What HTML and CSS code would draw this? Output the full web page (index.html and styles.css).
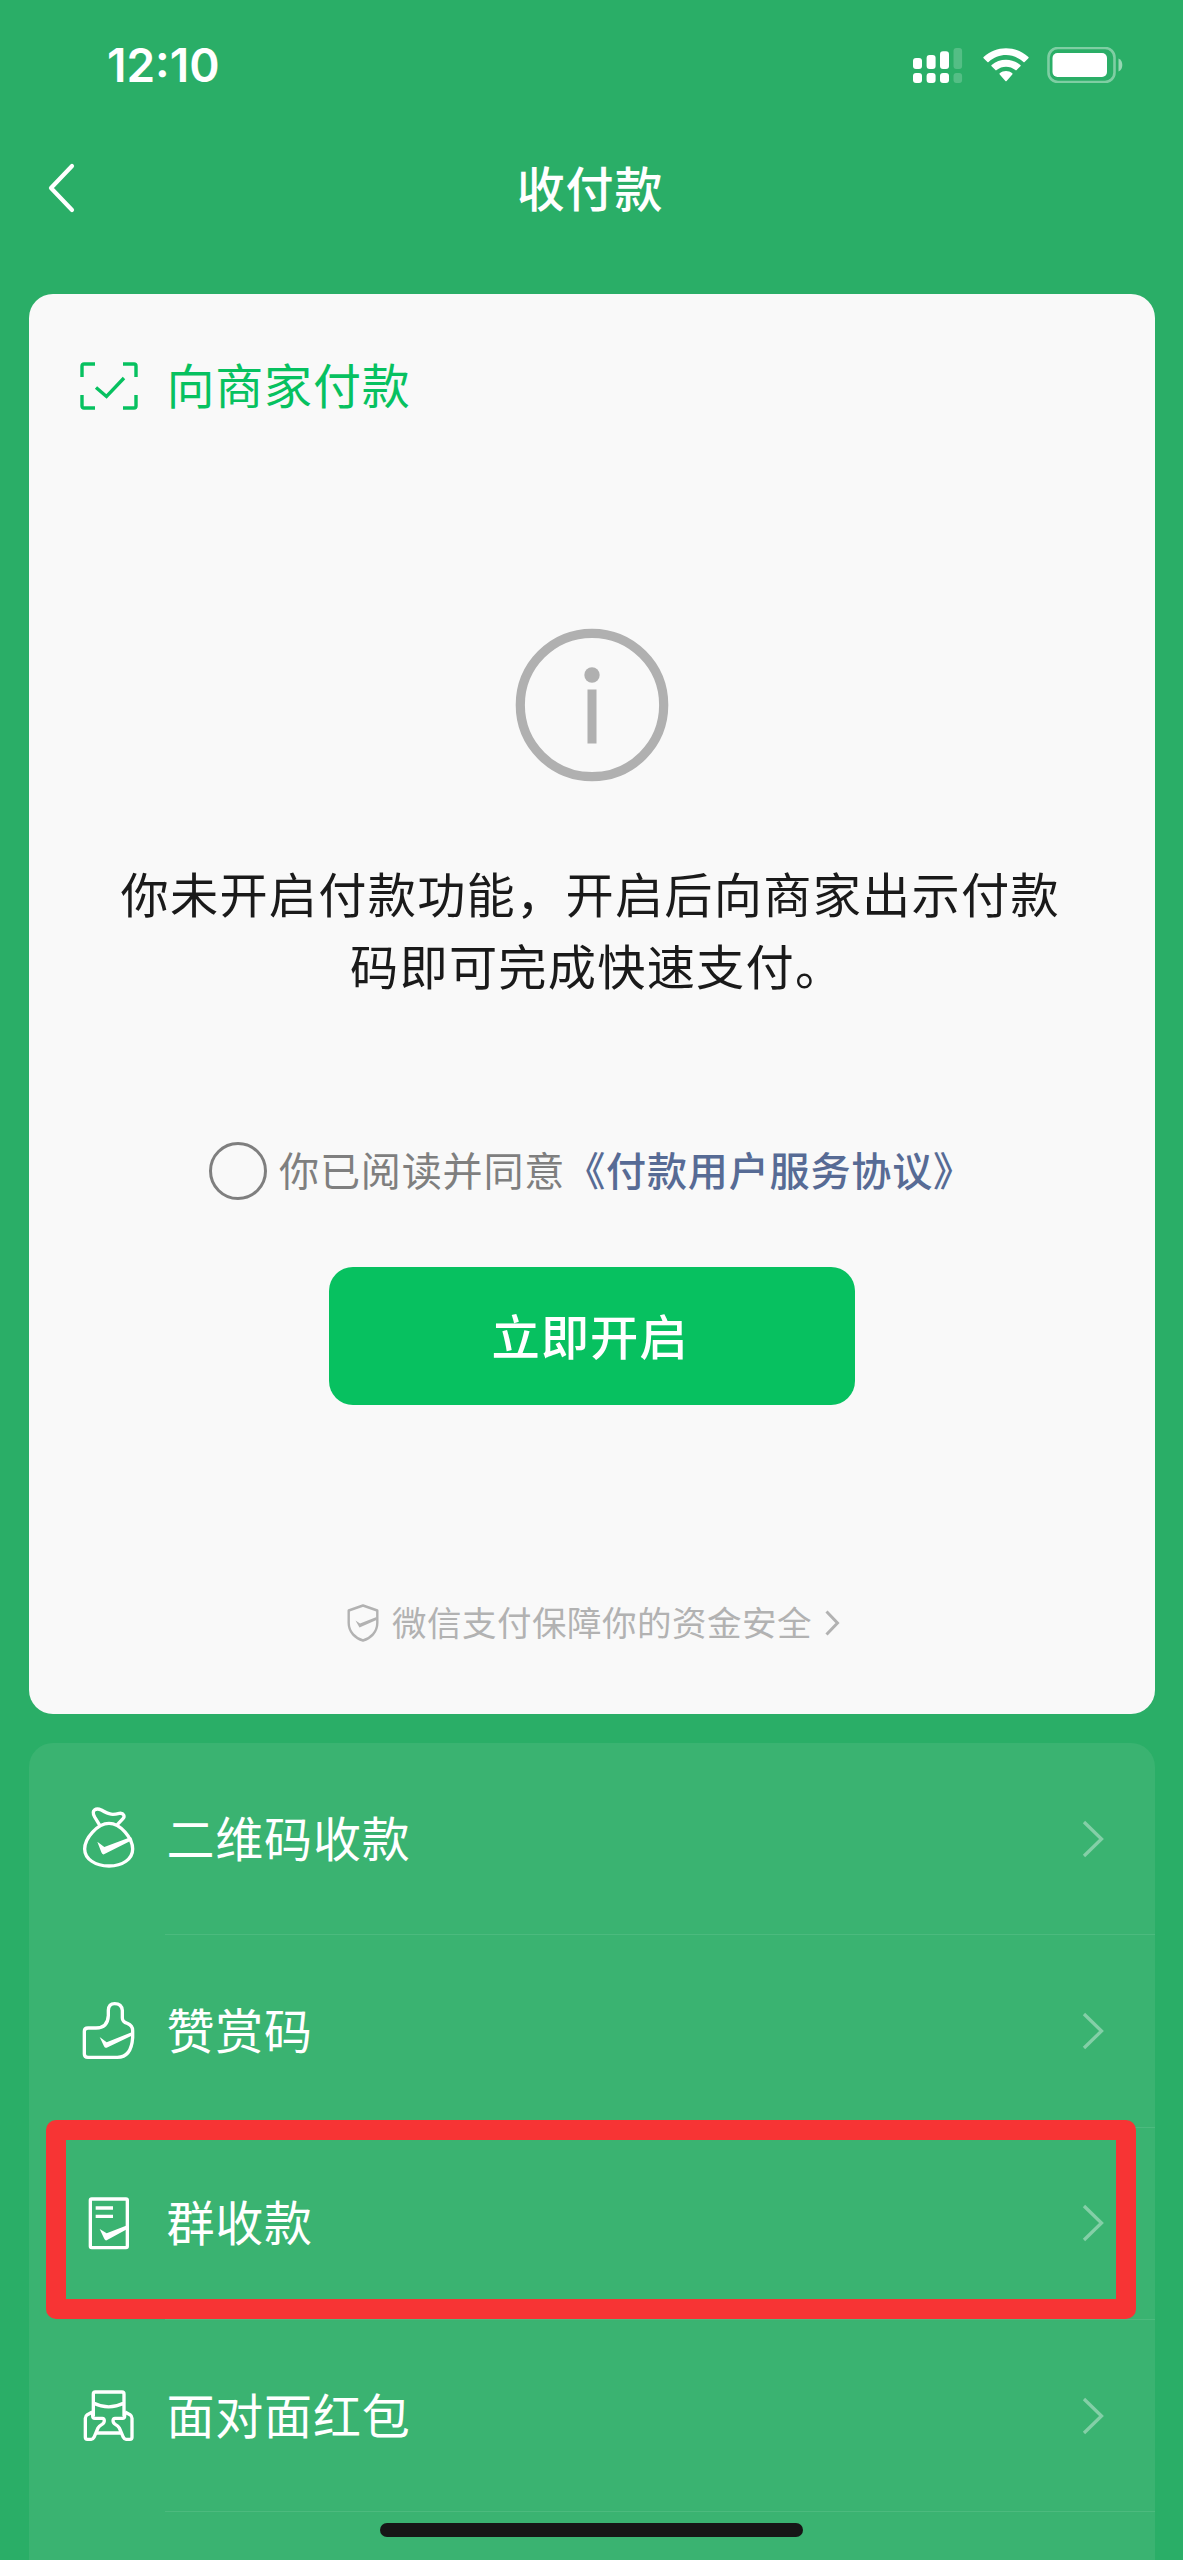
FILE: index.html
```html
<!DOCTYPE html>
<html lang="zh-CN">
<head>
<meta charset="utf-8">
<title>收付款</title>
<link rel="stylesheet" href="styles.css">
</head>
<body>
<div class="screen">
  <header class="status">
    <span class="time">12:10</span>
    <div class="status-icons">
      <svg width="50" height="36" viewBox="0 0 50 36" fill="#fff">
        <rect x="0" y="11" width="9" height="11" rx="3"/><rect x="13.6" y="8" width="9" height="14" rx="3"/><rect x="27" y="4.3" width="9" height="17.7" rx="3"/><rect x="40.5" y="1" width="8.6" height="21" rx="3" opacity=".2"/>
        <rect x="0" y="26" width="9" height="10" rx="3"/><rect x="13.6" y="26" width="9" height="10" rx="3"/><rect x="27" y="26" width="9" height="10" rx="3"/><rect x="40.5" y="26" width="8.6" height="10" rx="3" opacity=".2"/>
      </svg>
      <svg class="wifi" width="46" height="36" viewBox="0 0 46 36" fill="#fff">
        <path d="M.6 11.2Q0 10.600 .6 10C13-1.800 33-1.800 45.400 10Q46 10.600 45.400 11.200L41.600 15Q41 15.600 40.400 15C30.500 5.800 15.500 5.800 5.600 15Q5 15.600 4.400 15Z"/>
        <path d="M8.600 19.300Q8 18.700 8.600 18.100C16.500 10.800 29.500 10.800 37.400 18.100Q38 18.700 37.400 19.300L33.600 23.100Q33 23.700 32.400 23.100C27 18.500 19 18.500 13.600 23.100Q13 23.700 12.400 23.100Z"/>
        <path d="M16.700 27.500Q16.100 26.900 16.700 26.300C20.300 23.300 25.700 23.300 29.300 26.300Q29.900 26.900 29.300 27.500L23.600 33.900Q23 34.500 22.400 33.900Z"/>
      </svg>
      <svg width="76" height="36" viewBox="0 0 76 36" fill="#fff">
        <rect x="1.500" y="1" width="66" height="34" rx="9.500" fill="none" stroke="#fff" stroke-width="2.600" opacity=".4"/>
        <rect x="5.500" y="6" width="54.500" height="24" rx="5"/>
        <path d="M71.500 11.500C76.600 13.500 76.600 22.500 71.500 24.500Z" opacity=".5"/>
      </svg>
    </div>
  </header>
  <nav class="nav">
    <svg class="back" width="28" height="50" viewBox="0 0 28 50"><path d="M25 3L4 25L25 47" fill="none" stroke="#fff" stroke-width="4.200" stroke-linecap="round" stroke-linejoin="round"/></svg>
    <h1 class="title">收付款</h1>
  </nav>

  <main class="card">
    <div class="card-head">
      <svg width="58" height="48" viewBox="0 0 58 48" fill="none" stroke="#07c160" stroke-width="3.400">
        <path d="M2 15V4Q2 2 4 2H15M43 2H54Q56 2 56 4V15M56 33V44Q56 46 54 46H43M15 46H4Q2 46 2 44V33M16 25.500L26.500 34.500L44 16"/>
      </svg>
      <span>向商家付款</span>
    </div>
    <svg class="info" width="154" height="154" viewBox="0 0 154 154">
      <circle cx="77" cy="77" r="71.700" fill="none" stroke="#b0b0b0" stroke-width="9.200"/>
      <circle cx="77" cy="47" r="7.700" fill="#b0b0b0"/><rect x="72.500" y="61.500" width="9" height="54" fill="#b0b0b0"/>
    </svg>
    <p class="message"><span>你未开启付款功能，开启后向商家出示付款</span><span class="second">码即可完成快速支付。</span></p>
    <div class="agree"><i class="radio"></i><span class="agree-text">你已阅读并同意</span><a class="link">《付款用户服务协议》</a></div>
    <button class="enable">立即开启</button>
    <div class="safe">
      <svg width="32" height="38" viewBox="0 0 32 38"><path d="M16 1.500L30.300 6.500V19C30.300 28 23.500 34.500 16 36.500C8.500 34.500 1.700 28 1.700 19V6.500Z" fill="none" stroke="#b2b2b2" stroke-width="2.400" stroke-linejoin="round"/><path d="M8.500 16.500L13 19.500L29.500 13V16L12.500 23.500Z" fill="#b2b2b2"/></svg>
      <span>微信支付保障你的资金安全</span>
      <svg width="16" height="28" viewBox="0 0 16 28"><path d="M2.500 2.500L13.500 14L2.500 25.500" fill="none" stroke="#b2b2b2" stroke-width="3"/></svg>
    </div>
  </main>

  <section class="list">
    <div class="row">
      <svg class="icon icon-bag" width="80" height="90" viewBox="0 0 240 270">
        <path d="M88 104L74 81C62 59 79 53 94 60C120 75 128 75 148 70C162 68 165 80 159 86L142 104M117 100C151 100 188 144 188 177C188 207 158 228 117 228C76 228 44 207 44 177C44 144 83 100 117 100Z"/><path class="tick" d="M82 155L103 171L183 141L187 150L102 193Q97 195 94 187Z"/>
      </svg>
      <div class="cell"><span>二维码收款</span><svg class="go" width="24" height="40" viewBox="0 0 24 40"><path d="M3 3L20.500 20L3 37"/></svg></div>
    </div>
    <div class="row">
      <svg class="icon" width="80" height="90" viewBox="0 0 240 270">
        <path d="M54 129H78C105 129 114 112 115 92V76Q116 56 134 56Q155 56 157 76V99Q157 111 172 115Q188 121 188 137V158Q184 217 142 217H54Q43 217 43 207V139Q43 129 54 129Z"/><path class="tick" d="M89 156L110 172L185 142V152L110 188Q105 190 102 184Z"/>
      </svg>
      <div class="cell"><span>赞赏码</span><svg class="go" width="24" height="40" viewBox="0 0 24 40"><path d="M3 3L20.500 20L3 37"/></svg></div>
    </div>
    <div class="row">
      <svg class="icon icon-bill" width="80" height="90" viewBox="0 0 240 270">
        <rect x="61" y="57" width="111" height="146" rx="4"/><path d="M77 84H129M77 109H129"/><path class="tick" d="M89 147L110 160L172 136V147L110 181Q105 183 102 175Z"/>
      </svg>
      <div class="cell"><span>群收款</span><svg class="go" width="24" height="40" viewBox="0 0 24 40"><path d="M3 3L20.500 20L3 37"/></svg></div>
      <div class="highlight"></div>
    </div>
    <div class="row">
      <svg class="icon" width="80" height="90" viewBox="0 0 240 270">
        <path d="M70 139V72Q70 66 76 66H156Q162 66 162 72V139M70 99Q116 122 162 99"/>
        <path d="M67 126L52 134Q46 138 46 145V202Q46 208 52 208H64Q69 208 72 202L84 174Q87 168 96 163C106 157 104 145 97 145H75Q68 145 68 138V126"/>
        <path d="M165 126L180 134Q186 138 186 145V202Q186 208 180 208H168Q163 208 160 202L148 174Q145 168 136 163C126 157 128 145 135 145H157Q164 145 164 138V126M79 189H153" />
      </svg>
      <div class="cell"><span>面对面红包</span><svg class="go" width="24" height="40" viewBox="0 0 24 40"><path d="M3 3L20.500 20L3 37"/></svg></div>
    </div>
  </section>
  <div class="home"></div>
</div>
</body>
</html>
```
FILE: styles.css
```css
* { box-sizing: border-box; }
body {
  margin: 0;
  font-family: "Noto Sans CJK SC", sans-serif;
  font-size: 48px;
  letter-spacing: .8px;
  background: #2aae67;
}
.screen {
  position: relative;
  width: 1183px;
  height: 2560px;
  overflow: hidden;
  display: flex;
  flex-direction: column;
  padding: 0 28.500px;
}
.status {
  height: 130px;
  flex: none;
  display: flex;
  justify-content: space-between;
  align-items: center;
  padding: 0 31.500px 0 78.500px;
}
.time {
  font: 600 46px/1 Inter, sans-serif;
  letter-spacing: 0;
  color: #fff;
}
.status-icons { display: flex; align-items: center; }
.wifi { margin: 0 18px 0 20px; }
.nav {
  height: 164px;
  flex: none;
  display: grid;
  grid-template-columns: 100px 1fr 100px;
  align-items: start;
}
.back { margin: 33px 0 0 18px; }
.title {
  margin: 21px 3px 0 0;
  font-size: 48px;
  font-weight: 500;
  line-height: 71px;
  text-align: center;
  color: #fff;
}
.card {
  height: 1420px;
  flex: none;
  border-radius: 24px;
  background: #f9f9f9;
  display: flex;
  flex-direction: column;
  align-items: center;
}
.card-head {
  align-self: stretch;
  display: flex;
  align-items: center;
  gap: 29px;
  height: 72px;
  margin: 56px 0 0 51px;
  color: #07c160;
  line-height: 66px;
}
.card-head span { margin-top: -6px; }
.info { margin-top: 206px; }
.message {
  width: 942px;
  margin: 75px 0 0;
  font-size: 48.200px;
  letter-spacing: 1.250px;
  line-height: 71.500px;
  color: #1a1a1a;
  white-space: nowrap;
}
.message span { display: block; }
.message .second { padding-left: 229.500px; }
.agree {
  display: flex;
  align-items: center;
  align-self: flex-start;
  margin: 142px 0 0 180.500px;
  height: 58px;
  font-size: 40.100px;
  line-height: 54px;
  color: #7f7f7f;
  white-space: nowrap;
}
.radio {
  width: 58px;
  height: 58px;
  margin-right: 12px;
  border: 3px solid #7f7f7f;
  border-radius: 50%;
}
.agree span, .agree a { margin-top: -4px; }
.link { font-weight: 500; color: #576b95; }
.enable {
  width: 526px;
  height: 138px;
  margin-top: 67px;
  padding: 0 3px 5px 0;
  border: 0;
  border-radius: 24px;
  background: #07c160;
  color: #fff;
  font: 500 48.300px "Noto Sans CJK SC", sans-serif;
  letter-spacing: 1px;
}
.safe {
  display: flex;
  align-items: center;
  margin: 194px 0 0 4px;
  height: 48px;
  font-size: 34.500px;
  letter-spacing: .5px;
  line-height: 40px;
  color: #b2b2b2;
}
.safe span { margin: -4px 12px 0 13px; }
.list {
  height: 817px;
  flex: none;
  margin-top: 29px;
  border-radius: 24px 24px 0 0;
  background: #3ab371;
  color: #fff;
}
.row {
  position: relative;
  display: flex;
  align-items: center;
  height: 192.300px;
}
.icon { margin: 0 0 2px 41.500px; flex: none; fill: none; stroke: #fff; stroke-width: 10; stroke-linejoin: round; }
.icon .tick { fill: #fff; stroke: none; }
.icon-bag { margin-bottom: 8px; }
.icon-bill { margin-bottom: 0; margin-top: 3px; }
.cell {
  flex: 1;
  height: 100%;
  display: flex;
  align-items: center;
  justify-content: space-between;
  margin-left: 15px;
  padding: 0 50px 0 1.500px;
  border-bottom: 1.500px solid #4cba7e;
}
.cell span { margin-top: -6px; }
.go { fill: none; stroke: #84cfa7; stroke-width: 3.300; }
.highlight {
  position: absolute;
  left: 17.500px;
  top: -7.500px;
  width: 1090px;
  height: 199px;
  border: 20px solid #f73434;
  border-radius: 10px;
}
.home {
  position: absolute;
  left: 380px;
  top: 2523px;
  width: 423px;
  height: 14px;
  border-radius: 7px;
  background: #161616;
}
```
